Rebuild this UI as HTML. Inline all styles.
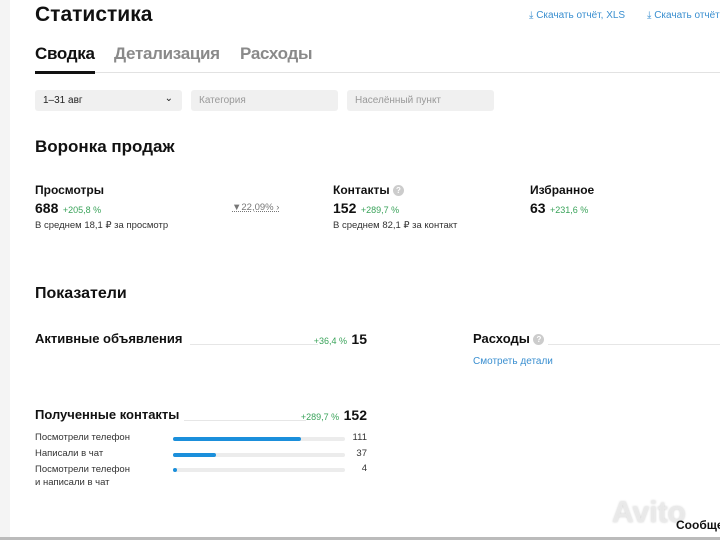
<!DOCTYPE html>
<html><head><meta charset="utf-8"><style>
*{margin:0;padding:0;box-sizing:border-box}
body{width:720px;height:540px;overflow:hidden;background:#fff;font-family:"Liberation Sans",sans-serif;color:#111;position:relative}
.a{position:absolute;white-space:nowrap}
.b{font-weight:bold}
.g{color:#3aa35a;font-size:9px}
.lnk{color:#3a8fd0;font-size:10px}
.box{position:absolute;top:90px;height:21px;background:#f0f0f0;border-radius:3px;font-size:10px;color:#999;padding:5px 8px}
.dl{position:absolute;height:1px;background:#e6e6e6}
.tr{position:absolute;left:173px;width:172px;height:4px;background:#ececec;border-radius:2px}
.fl{position:absolute;left:0;top:0;height:4px;background:#1b8fdb;border-radius:2px}
.s{font-size:9.5px;color:#333}
.q{display:inline-block;width:11px;height:11px;border-radius:50%;background:#ccc;color:#fff;font-size:8px;text-align:center;line-height:11px;vertical-align:1px}
.r{position:absolute;right:353px;white-space:nowrap}
</style></head><body>
<div class="a" style="left:0;top:0;width:10px;height:540px;background:#f4f4f4"></div>
<div class="a b" style="left:35px;top:3px;font-size:21px">Статистика</div>
<div class="a lnk" style="left:529px;top:10px">⤓ Скачать отчёт, XLS</div>
<div class="a lnk" style="left:647px;top:10px">⤓ Скачать отчёт</div>
<div class="a b" style="left:35px;top:44px;font-size:17px;letter-spacing:-0.3px">Сводка</div>
<div class="a b" style="left:114px;top:44px;font-size:17px;color:#8a8a8a;letter-spacing:-0.3px">Детализация</div>
<div class="a b" style="left:240px;top:44px;font-size:17px;color:#8a8a8a;letter-spacing:-0.3px">Расходы</div>
<div class="a" style="left:35px;top:72px;width:685px;height:1px;background:#e2e2e2"></div>
<div class="a" style="left:35px;top:71px;width:60px;height:3px;background:#111"></div>
<div class="box" style="left:35px;width:147px;color:#222">1–31 авг<span style="position:absolute;right:9px;top:3px;font-size:10px">⌄</span></div>
<div class="box" style="left:191px;width:147px">Категория</div>
<div class="box" style="left:347px;width:147px">Населённый пункт</div>
<div class="a b" style="left:35px;top:137px;font-size:17px">Воронка продаж</div>
<div class="a b" style="left:35px;top:183px;font-size:12px">Просмотры</div>
<div class="a" style="left:35px;top:200px"><b style="font-size:14px">688</b> <span class="g">+205,8 %</span></div>
<div class="a s" style="left:35px;top:220px">В среднем 18,1 ₽ за просмотр</div>
<div class="a" style="left:232px;top:202px;font-size:9.5px;color:#777;text-decoration:underline dotted">▼22,09% ›</div>
<div class="a b" style="left:333px;top:183px;font-size:12px">Контакты <span class="q">?</span></div>
<div class="a" style="left:333px;top:200px"><b style="font-size:14px">152</b> <span class="g">+289,7 %</span></div>
<div class="a s" style="left:333px;top:220px">В среднем 82,1 ₽ за контакт</div>
<div class="a b" style="left:530px;top:183px;font-size:12px">Избранное</div>
<div class="a" style="left:530px;top:200px"><b style="font-size:14px">63</b> <span class="g">+231,6 %</span></div>
<div class="a b" style="left:35px;top:285px;font-size:16px">Показатели</div>
<div class="a b" style="left:35px;top:331px;font-size:13px">Активные объявления</div>
<div class="dl" style="left:190px;top:344px;width:128px"></div>
<div class="r" style="top:331px"><span class="g">+36,4 %</span> <b style="font-size:14px">15</b></div>
<div class="a b" style="left:473px;top:331px;font-size:13px">Расходы <span class="q">?</span></div>
<div class="dl" style="left:548px;top:344px;width:172px"></div>
<div class="a lnk" style="left:473px;top:356px">Смотреть детали</div>
<div class="a b" style="left:35px;top:407px;font-size:13px">Полученные контакты</div>
<div class="dl" style="left:184px;top:420px;width:122px"></div>
<div class="r" style="top:407px"><span class="g">+289,7 %</span> <b style="font-size:14px">152</b></div>
<div class="a s" style="left:35px;top:432px">Посмотрели телефон</div>
<div class="tr" style="top:437px"><div class="fl" style="width:128px"></div></div>
<div class="r s" style="top:432px">111</div>
<div class="a s" style="left:35px;top:448px">Написали в чат</div>
<div class="tr" style="top:453px"><div class="fl" style="width:43px"></div></div>
<div class="r s" style="top:448px">37</div>
<div class="a s" style="left:35px;top:463px;line-height:13px">Посмотрели телефон<br>и написали в чат</div>
<div class="tr" style="top:468px"><div class="fl" style="width:4px"></div></div>
<div class="r s" style="top:463px">4</div>
<div class="a b" style="left:612px;top:496px;font-size:30px;color:rgba(235,235,235,.9);text-shadow:0 0 2px #ccc">Avito</div>
<div class="a b" style="left:676px;top:518px;font-size:12px">Сообще</div>
<div class="a" style="left:0;top:537px;width:720px;height:3px;background:#bbb"></div>
</body></html>
